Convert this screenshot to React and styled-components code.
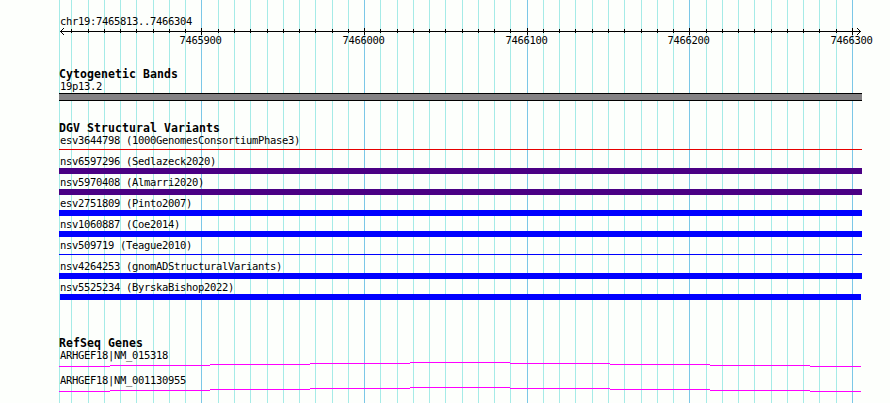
import React from 'react';
import styled, { createGlobalStyle } from 'styled-components';

const GlobalStyle = createGlobalStyle`
	body {
		margin: 0;
		background-color: #fdfffc;
	}
`;

const Browser = styled.main`
	position: relative;
	box-sizing: border-box;
	width: 890px;
	height: 403px;
	padding: 15px 28px 0 59px;
	overflow: hidden;
	color: black;
	background-color: #fdfffc;
	font-family: 'DejaVu Sans Mono', 'Liberation Mono', monospace;
	font-size: 10.5px;
	letter-spacing: -0.32px;
`;

const GridLines = styled.svg`
	position: absolute;
	top: 0;
	left: 0;
`;

const Content = styled.div`
	position: relative;
	width: 803px;
`;

const Label = styled.div`
	height: 13px;
	padding-left: 1px;
	line-height: 12px;
	white-space: pre;
`;

const Ruler = styled.svg`
	display: block;
	overflow: visible;
`;

const Track = styled.section`
	margin-top: ${props => props.$gap}px;
`;

const TrackTitle = styled.h2`
	height: 12px;
	margin: 0;
	font-size: 11.5px;
	font-weight: bold;
	line-height: 13px;
	letter-spacing: 0.077px;
	white-space: pre;
`;

const Band = styled.div`
	box-sizing: border-box;
	height: 8px;
	border: solid black;
	border-width: 1px 0;
	background-color: #848284;
`;

const Feature = styled.div`
	height: 21px;
`;

const Bar = styled.div`
	height: ${props => (props.$thin ? 1 : 6)}px;
	margin-top: ${props => (props.$thin ? 2 : 0)}px;
	margin-left: ${props => (props.$inset ? 1 : 0)}px;
	margin-right: ${props => (props.$inset ? 1 : 0)}px;
	background-color: ${props => props.$color};
`;

const Gene = styled.div`
	height: 25px;
`;

const Intron = styled.svg`
	display: block;
`;

const ticks = [];
for (let i = -8; i <= 40; i++) {
	ticks.push({
		x: Math.floor(201.98 + i * 16.26),
		major: i % 10 === 0,
		position: 7465900 + i * 10,
	});
}

const variants = [
	{ name: 'esv3644798 (1000GenomesConsortiumPhase3)', color: '#e70000', thin: true },
	{ name: 'nsv6597296 (Sedlazeck2020)', color: '#4a0084' },
	{ name: 'nsv5970408 (Almarri2020)', color: '#4a0084' },
	{ name: 'esv2751809 (Pinto2007)', color: '#0000ff' },
	{ name: 'nsv1060887 (Coe2014)', color: '#0000ff' },
	{ name: 'nsv509719 (Teague2010)', color: '#0000ff', thin: true },
	{ name: 'nsv4264253 (gnomADStructuralVariants)', color: '#0000ff' },
	{ name: 'nsv5525234 (ByrskaBishop2022)', color: '#0000ff', inset: true },
];

const genes = ['ARHGEF18|NM_015318', 'ARHGEF18|NM_001130955'];

// x start, x end and height of each step of the intron line
const steps = [
	[0, 51, 4],
	[51, 151, 3],
	[151, 251, 2],
	[251, 351, 1],
	[351, 451, 0],
	[451, 551, 1],
	[551, 651, 2],
	[651, 751, 3],
	[751, 802, 4],
];

const Grid = () => (
	<GridLines width="890" height="403" shapeRendering="crispEdges">
		<rect x="59" y="0" width="1" height="403" fill="#a5ebe7" />
		{ticks.map(tick => (
			<rect
				key={tick.x}
				x={tick.x}
				y="0"
				width="1"
				height="403"
				fill={tick.major ? '#7bc7e7' : '#a5ebe7'}
			/>
		))}
	</GridLines>
);

const Scale = () => (
	<Ruler width="803" height="21" viewBox="59 28 803 21">
		<g shapeRendering="crispEdges">
			<rect x="60" y="31" width="801" height="1" />
			{ticks.map(tick => (
				<rect
					key={tick.x}
					x={tick.x}
					y={tick.major ? 28 : 29}
					width="1"
					height={tick.major ? 7 : 4}
				/>
			))}
			{[1, 2, 3].map(n => (
				<React.Fragment key={n}>
					<rect x={60 + n} y={31 - n} width="1" height="1" />
					<rect x={60 + n} y={31 + n} width="1" height="1" />
					<rect x={860 - n} y={31 - n} width="1" height="1" />
					<rect x={860 - n} y={31 + n} width="1" height="1" />
				</React.Fragment>
			))}
		</g>
		{ticks
			.filter(tick => tick.major)
			.map(tick => (
				<text key={tick.x} x={tick.x - 21.5} y="44">
					{tick.position}
				</text>
			))}
	</Ruler>
);

const App = () => (
	<React.Fragment>
		<GlobalStyle />
		<Browser>
			<Grid />
			<Content>
				<Label>chr19:7465813..7466304</Label>
				<Scale />
				<Track $gap={19}>
					<TrackTitle>Cytogenetic Bands</TrackTitle>
					<Label>19p13.2</Label>
					<Band />
				</Track>
				<Track $gap={21}>
					<TrackTitle>DGV Structural Variants</TrackTitle>
					{variants.map(variant => (
						<Feature key={variant.name}>
							<Label>{variant.name}</Label>
							<Bar
								$color={variant.color}
								$thin={variant.thin}
								$inset={variant.inset}
							/>
						</Feature>
					))}
				</Track>
				<Track $gap={35}>
					<TrackTitle>RefSeq Genes</TrackTitle>
					{genes.map(gene => (
						<Gene key={gene}>
							<Label>{gene}</Label>
							<Intron width="803" height="5" shapeRendering="crispEdges">
								{steps.map(([start, end, y]) => (
									<rect
										key={start}
										x={start}
										y={y}
										width={end - start}
										height="1"
										fill="#ff00ff"
									/>
								))}
							</Intron>
						</Gene>
					))}
				</Track>
			</Content>
		</Browser>
	</React.Fragment>
);

export default App;
